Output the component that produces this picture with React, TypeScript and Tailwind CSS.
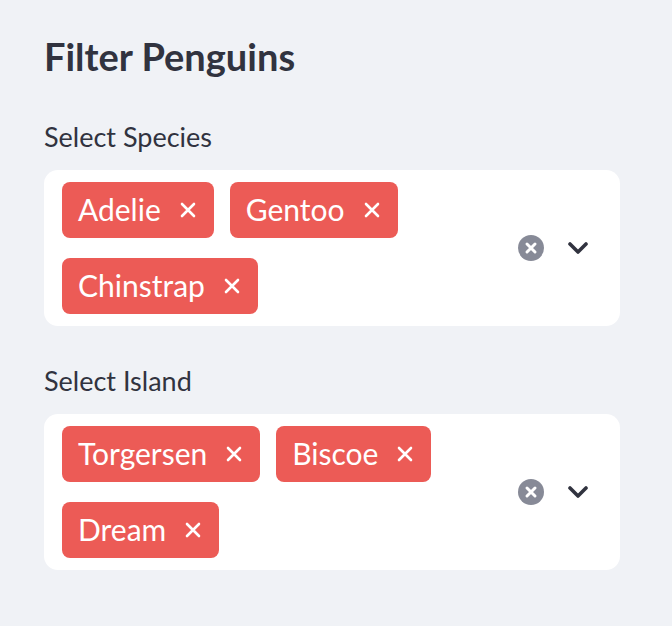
import React from "react";

const FONT = { fontFamily: "Lato, 'Noto Sans', sans-serif" };

function Tag({ label }: { label: string }) {
  return (
    <div className="flex h-[56px] items-center rounded-[8px] bg-[#ec5b56] pl-[16px] pr-[18px] text-white">
      <span className="mb-[3px] text-[30px] leading-none">{label}</span>
      <svg className="ml-[19px]" width="16" height="16" viewBox="0 0 16 16">
        <path d="M2 2 L14 14 M14 2 L2 14" stroke="white" strokeWidth="2.6" strokeLinecap="round" />
      </svg>
    </div>
  );
}

function MultiSelect({ label, rows }: { label: string; rows: string[][] }) {
  return (
    <div className="w-[576px]">
      <div className="h-[44px] text-[27px] leading-[44px] text-[#31333f]">{label}</div>
      <div className="mt-[11px] flex items-center rounded-[14px] bg-white py-[12px] pl-[18px] pr-[32px]">
        <div className="flex flex-1 flex-col gap-[20px]">
          {rows.map((r, i) => (
            <div key={i} className="flex gap-[16px]">
              {r.map((t) => (
                <Tag key={t} label={t} />
              ))}
            </div>
          ))}
        </div>
        <div className="flex items-center gap-[24px]">
          <svg width="26" height="26" viewBox="0 0 26 26">
            <circle cx="13" cy="13" r="13" fill="#878a97" />
            <path d="M9 9 L17 17 M17 9 L9 17" stroke="white" strokeWidth="3" strokeLinecap="round" />
          </svg>
          <svg width="20" height="12" viewBox="0 0 20 12">
            <path d="M2 2 L10 10 L18 2" stroke="#31333f" strokeWidth="3.6" fill="none" strokeLinecap="round" strokeLinejoin="round" />
          </svg>
        </div>
      </div>
    </div>
  );
}

export default function App() {
  return (
    <div className="min-h-screen w-full bg-[#f0f2f6] px-[44px] pt-[32px]" style={FONT}>
      <h2 className="text-[38px] font-bold leading-[48px] text-[#31333f]">Filter Penguins</h2>
      <div className="mt-[35px]">
        <MultiSelect label="Select Species" rows={[["Adelie", "Gentoo"], ["Chinstrap"]]} />
      </div>
      <div className="mt-[33px]">
        <MultiSelect label="Select Island" rows={[["Torgersen", "Biscoe"], ["Dream"]]} />
      </div>
    </div>
  );
}
